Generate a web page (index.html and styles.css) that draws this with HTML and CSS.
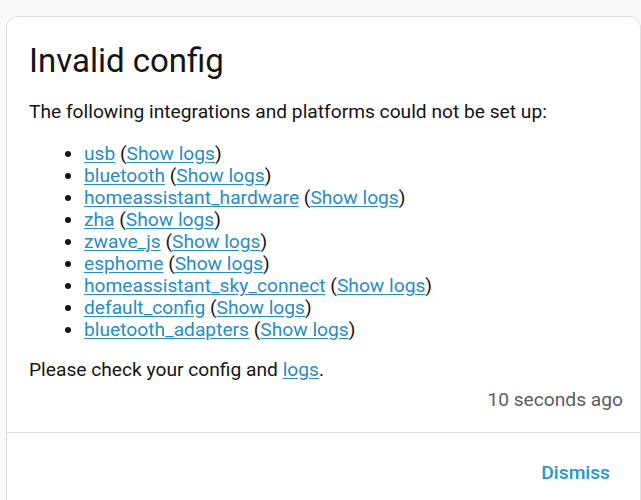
FILE: index.html
```html
<!DOCTYPE html>
<html>
<head>
<meta charset="utf-8">
<link rel="stylesheet" href="styles.css">
</head>
<body>
<div class="card">
  <div class="content">
    <h1 class="title">Invalid config</h1>
    <p class="intro">The following integrations and platforms could not be set up:</p>
    <ul class="list">
      <li><a href="#">usb</a> (<a href="#">Show logs</a>)</li>
      <li><a href="#">bluetooth</a> (<a href="#">Show logs</a>)</li>
      <li><a href="#">homeassistant_hardware</a> (<a href="#">Show logs</a>)</li>
      <li><a href="#">zha</a> (<a href="#">Show logs</a>)</li>
      <li><a href="#">zwave_js</a> (<a href="#">Show logs</a>)</li>
      <li><a href="#">esphome</a> (<a href="#">Show logs</a>)</li>
      <li><a href="#">homeassistant_sky_connect</a> (<a href="#">Show logs</a>)</li>
      <li><a href="#">default_config</a> (<a href="#">Show logs</a>)</li>
      <li><a href="#">bluetooth_adapters</a> (<a href="#">Show logs</a>)</li>
    </ul>
    <p class="outro">Please check your config and <a href="#">logs</a>.</p>
    <div class="time">10 seconds ago</div>
  </div>
  <div class="actions">
    <button class="dismiss">Dismiss</button>
  </div>
</div>
</body>
</html>
```
FILE: styles.css
```css
html, body {
  margin: 0;
  padding: 0;
  background: #fafafa;
  font-family: Roboto, "Noto Sans", sans-serif;
  color: #141414;
}
body {
  padding: 16px 0 0 6px;
  height: 500px;
  box-sizing: border-box;
  overflow: hidden;
}
.card {
  background: #fff;
  border: 1px solid #e0e0e0;
  border-radius: 12px;
  height: 484px;
  box-sizing: border-box;
  border-bottom-left-radius: 0;
  border-bottom-right-radius: 0;
  border-bottom: none;
}
.content {
  padding: 22px 17px 0 22px;
}
.title {
  margin: 0;
  font-size: 33px;
  font-weight: 400;
  line-height: 44px;
}
.intro {
  margin: 18px 0 0;
  font-size: 19.2px;
  line-height: 22px;
}
.list {
  margin: 20px 0 0;
  padding-left: 55px;
  font-size: 19.2px;
  line-height: 22px;
}
a {
  color: #288cc6;
  text-decoration: underline;
  text-underline-offset: 2px;
}
.outro {
  margin: 18px 0 0;
  font-size: 19.2px;
  line-height: 22px;
}
.time {
  margin-top: 8px;
  text-align: right;
  font-size: 19.2px;
  line-height: 22px;
  color: #5c5c5c;
}
.actions {
  margin-top: 21px;
  border-top: 1px solid #e0e0e0;
  display: flex;
  justify-content: flex-end;
  padding: 29px 30px 0 0;
}
.dismiss {
  background: none;
  border: none;
  padding: 0;
  font-family: Roboto, "Noto Sans", sans-serif;
  font-size: 19.2px;
  font-weight: 500;
  line-height: 22px;
  color: #2196d4;
}
```
